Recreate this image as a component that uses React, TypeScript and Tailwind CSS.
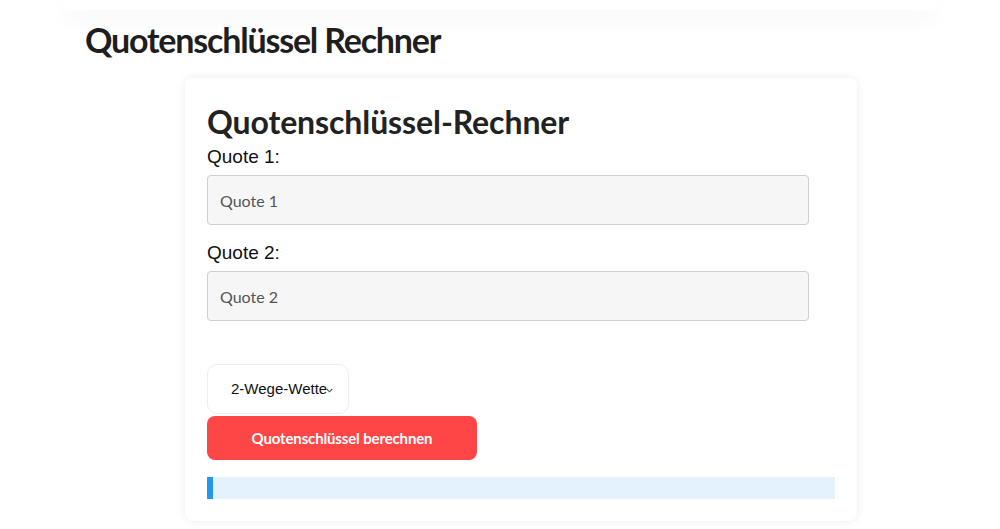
import React, { useState } from "react";

type BetType = "2" | "3";

export default function App() {
    const [quote1, setQuote1] = useState<string>("");
    const [quote2, setQuote2] = useState<string>("");
    const [betType, setBetType] = useState<BetType>("2");

    return (
        <div className="min-h-screen bg-white font-['Lato',sans-serif] text-[#222]">
            {/* header shadow peeking in from above */}
            <div className="mx-[62px] h-[10px] rounded-b-[40px] bg-white shadow-[0_8px_22px_rgba(0,0,0,0.06)]" />

            <h1 className="ml-[85px] mt-[10px] text-[34px] leading-[40px] font-bold tracking-[-1.2px] text-[#1e1e1e]">
                Quotenschlüssel Rechner
            </h1>

            <div className="mt-[18px] ml-[185px] w-[672px] rounded-lg bg-white px-[22px] pt-[22px] pb-[22px] shadow-[0_0_10px_rgba(0,0,0,0.08)]">
                <h2 className="text-[32px] leading-[44px] font-bold tracking-[-0.1px] text-[#222]">
                    Quotenschlüssel-Rechner
                </h2>

                <label className="block font-['Liberation_Sans',Arial,sans-serif] text-[19px] leading-[26px] text-[#111]">
                    Quote 1:
                </label>
                <input
                    value={quote1}
                    onChange={(e) => setQuote1(e.target.value)}
                    placeholder="Quote 1"
                    className="mt-[5px] block h-[50px] w-[602px] rounded-[4px] border border-[#cfcfcf] bg-[#f6f6f6] px-[12px] text-[16px] text-[#333] placeholder:text-[#555] outline-none"
                />

                <label className="mt-[15px] block font-['Liberation_Sans',Arial,sans-serif] text-[19px] leading-[26px] text-[#111]">
                    Quote 2:
                </label>
                <input
                    value={quote2}
                    onChange={(e) => setQuote2(e.target.value)}
                    placeholder="Quote 2"
                    className="mt-[5px] block h-[50px] w-[602px] rounded-[4px] border border-[#cfcfcf] bg-[#f6f6f6] px-[12px] text-[16px] text-[#333] placeholder:text-[#555] outline-none"
                />

                <div className="relative mt-[43px] h-[50px] w-[142px]">
                    <select
                        value={betType}
                        onChange={(e) => setBetType(e.target.value as BetType)}
                        className="h-full w-full appearance-none rounded-[10px] border border-[#eeeeee] bg-white pl-[23px] pr-[2px] font-['Liberation_Sans',Arial,sans-serif] text-[15px] text-[#111] outline-none"
                    >
                        <option value="2">2-Wege-Wette</option>
                        <option value="3">3-Wege-Wette</option>
                    </select>
                    <svg className="pointer-events-none absolute left-[119px] top-[24px] h-[5px] w-[7px]" viewBox="0 0 7 5" fill="none">
                        <path d="M0.8 1 L3.5 3.8 L6.2 1" stroke="#555" strokeWidth="1.1" />
                    </svg>
                </div>

                <button className="mt-[2px] block h-[44px] w-[270px] rounded-[8px] bg-[#ff4646] text-[15px] font-bold tracking-[-0.15px] text-white">
                    Quotenschlüssel berechnen
                </button>

                <div className="mt-[17px] h-[22px] w-full border-l-[6px] border-[#2196f3] bg-[#e3f2fd]" />
            </div>
        </div>
    );
}
